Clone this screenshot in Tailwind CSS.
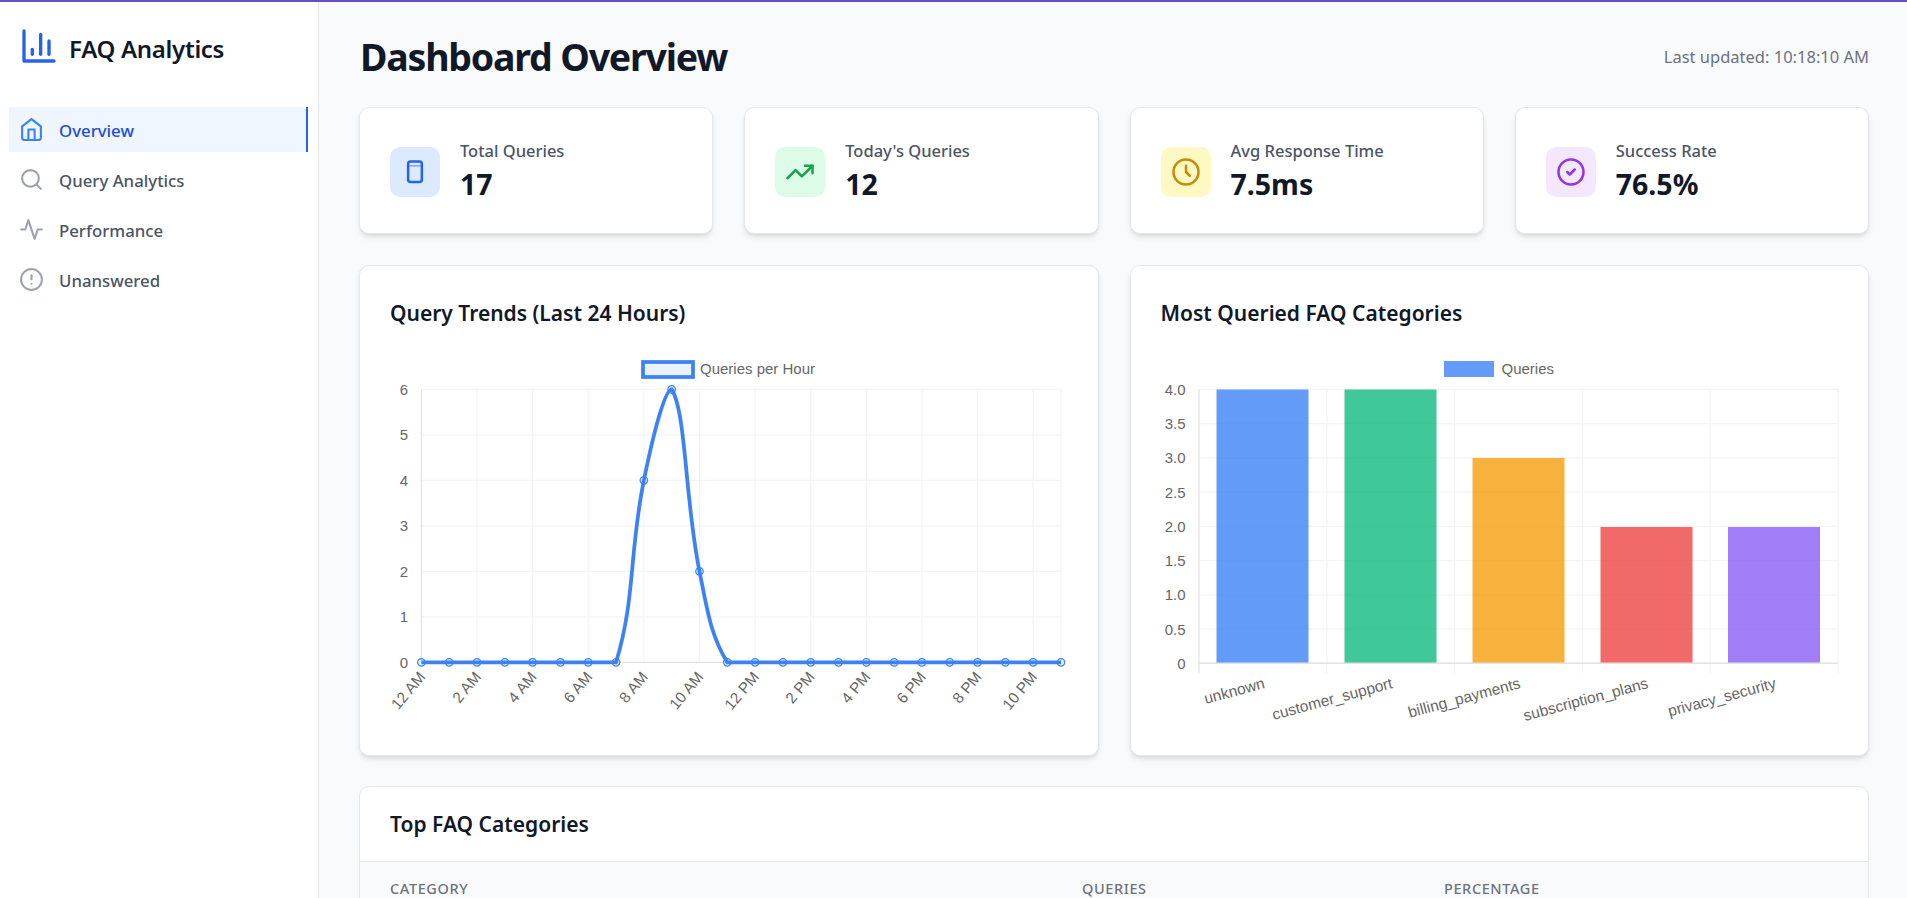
<!DOCTYPE html>
<html lang="en">
<head>
<meta charset="UTF-8">
<title>FAQ Analytics</title>
<script src="https://cdn.jsdelivr.net/npm/@tailwindcss/browser@4"></script>
</head>
<body class="h-screen overflow-hidden bg-[#f9fafb] font-['Noto_Sans',sans-serif] text-[#111827]">
<div class="h-[2px] bg-[#6650c0]"></div>
<div class="flex h-[896px]">

  <!-- Sidebar -->
  <aside class="w-[319px] shrink-0 bg-white border-r border-[#e5e7eb]">
    <div class="flex items-start gap-[10px] pl-[19px] pt-[24px]">
      <svg class="text-[#2563eb]" width="40" height="40" viewBox="0 0 24 24" fill="none" stroke="currentColor" stroke-width="2" stroke-linecap="round" stroke-linejoin="round"><path d="M3 3v18h18"/><path d="M18 17V9"/><path d="M13 17V5"/><path d="M8 17v-3"/></svg>
      <span class="mt-[5px] text-[24px] leading-[36px] font-semibold tracking-[-0.3px]">FAQ Analytics</span>
    </div>
    <nav class="mt-[40px] pl-[9px] pr-[10px] flex flex-col gap-[5px] text-[16.8px] font-medium text-[#4b5563]">
      <a class="h-[45px] flex items-center gap-[15px] pl-[10px] bg-[#eff6ff] text-[#1d4ed8] border-r-[2.5px] border-[#2563eb]">
        <svg class="text-[#3b82f6]" width="25" height="25" viewBox="0 0 24 24" fill="none" stroke="currentColor" stroke-width="2" stroke-linecap="round" stroke-linejoin="round"><path d="m3 9 9-7 9 7v11a2 2 0 0 1-2 2H5a2 2 0 0 1-2-2z"/><polyline points="9 22 9 12 15 12 15 22"/></svg>
        <span class="mt-[3px]">Overview</span>
      </a>
      <a class="h-[45px] flex items-center gap-[15px] pl-[10px]">
        <svg class="text-[#9ca3af]" width="25" height="25" viewBox="0 0 24 24" fill="none" stroke="currentColor" stroke-width="2" stroke-linecap="round" stroke-linejoin="round"><circle cx="11" cy="11" r="8"/><path d="m21 21-4.3-4.3"/></svg>
        <span class="mt-[3px]">Query Analytics</span>
      </a>
      <a class="h-[45px] flex items-center gap-[15px] pl-[10px]">
        <svg class="text-[#9ca3af]" width="25" height="25" viewBox="0 0 24 24" fill="none" stroke="currentColor" stroke-width="2" stroke-linecap="round" stroke-linejoin="round"><path d="M22 12h-4l-3 9L9 3l-3 9H2"/></svg>
        <span class="mt-[3px]">Performance</span>
      </a>
      <a class="h-[45px] flex items-center gap-[15px] pl-[10px]">
        <svg class="text-[#9ca3af]" width="25" height="25" viewBox="0 0 24 24" fill="none" stroke="currentColor" stroke-width="2" stroke-linecap="round" stroke-linejoin="round"><circle cx="12" cy="12" r="10"/><line x1="12" y1="8" x2="12" y2="12"/><line x1="12" y1="16" x2="12.01" y2="16"/></svg>
        <span class="mt-[3px]">Unanswered</span>
      </a>
    </nav>
  </aside>

  <!-- Main -->
  <main class="flex-1 min-w-0 overflow-hidden pt-[30px] pl-[40px] pr-[38px]">
    <header class="flex items-center justify-between h-[50px] mb-[25px]">
      <h1 class="ml-[1px] text-[37.5px] font-bold tracking-[-1.2px]">Dashboard Overview</h1>
      <span class="text-[16.5px] text-[#6b7280]">Last updated: 10:18:10 AM</span>
    </header>

    <!-- Stat cards -->
    <div class="grid grid-cols-4 gap-[31px] mb-[31px]">
      <div class="h-[127px] flex items-center gap-[20px] px-[30px] bg-white border border-[#e5e7eb] rounded-[10px] shadow-md">
        <div class="mt-[2px] w-[50px] h-[50px] flex items-center justify-center rounded-[10px] bg-[#dbeafe]">
          <svg class="text-[#2563eb]" width="30" height="30" viewBox="0 0 24 24" fill="none" stroke="currentColor" stroke-width="2" stroke-linecap="round" stroke-linejoin="round"><rect x="6.5" y="3.5" width="11" height="16.5" rx="2"/><line x1="6.5" y1="7" x2="17.5" y2="7" stroke-width="1" stroke-opacity="0.6"/></svg>
        </div>
        <div class="pt-[3px]">
          <p class="text-[16.5px] leading-[24px] font-medium text-[#4b5563]">Total Queries</p>
          <p class="text-[28.5px] leading-[42px] font-bold">17</p>
        </div>
      </div>
      <div class="h-[127px] flex items-center gap-[20px] px-[30px] bg-white border border-[#e5e7eb] rounded-[10px] shadow-md">
        <div class="mt-[2px] w-[50px] h-[50px] flex items-center justify-center rounded-[10px] bg-[#dcfce7]">
          <svg class="text-[#16a34a]" width="30" height="30" viewBox="0 0 24 24" fill="none" stroke="currentColor" stroke-width="2" stroke-linecap="round" stroke-linejoin="round"><polyline points="22 7 13.5 15.5 8.5 10.5 2 17"/><polyline points="16 7 22 7 22 13"/></svg>
        </div>
        <div class="pt-[3px]">
          <p class="text-[16.5px] leading-[24px] font-medium text-[#4b5563]">Today's Queries</p>
          <p class="text-[28.5px] leading-[42px] font-bold">12</p>
        </div>
      </div>
      <div class="h-[127px] flex items-center gap-[20px] px-[30px] bg-white border border-[#e5e7eb] rounded-[10px] shadow-md">
        <div class="mt-[2px] w-[50px] h-[50px] flex items-center justify-center rounded-[10px] bg-[#fef9c3]">
          <svg class="text-[#ca8a04]" width="30" height="30" viewBox="0 0 24 24" fill="none" stroke="currentColor" stroke-width="2" stroke-linecap="round" stroke-linejoin="round"><circle cx="12" cy="12" r="10"/><polyline points="12 7 12 12 15 15"/></svg>
        </div>
        <div class="pt-[3px]">
          <p class="text-[16.5px] leading-[24px] font-medium text-[#4b5563]">Avg Response Time</p>
          <p class="text-[28.5px] leading-[42px] font-bold">7.5ms</p>
        </div>
      </div>
      <div class="h-[127px] flex items-center gap-[20px] px-[30px] bg-white border border-[#e5e7eb] rounded-[10px] shadow-md">
        <div class="mt-[2px] w-[50px] h-[50px] flex items-center justify-center rounded-[10px] bg-[#f3e8ff]">
          <svg class="text-[#9333ea]" width="30" height="30" viewBox="0 0 24 24" fill="none" stroke="currentColor" stroke-width="2" stroke-linecap="round" stroke-linejoin="round"><circle cx="12" cy="12" r="10"/><path d="m9 12 2 2 4-4"/></svg>
        </div>
        <div class="pt-[3px]">
          <p class="text-[16.5px] leading-[24px] font-medium text-[#4b5563]">Success Rate</p>
          <p class="text-[28.5px] leading-[42px] font-bold">76.5%</p>
        </div>
      </div>
    </div>

    <!-- Charts -->
    <div class="grid grid-cols-2 gap-[31px] mb-[30px]">
      <div class="h-[491px] bg-white border border-[#e5e7eb] rounded-[10px] shadow-md px-[30px] pt-[31px]">
        <h2 class="text-[21px] leading-[32px] font-semibold mb-[11px]">Query Trends (Last 24 Hours)</h2>
        <svg id="trend" class="overflow-visible font-['Liberation_Sans',sans-serif]" width="678" height="390" viewBox="390 340 678 390" fill="#666" font-size="15">
          <rect x="643" y="362" width="50" height="15" fill="#ebf2fe" stroke="#3b82f6" stroke-width="3.75"/>
          <text x="700" y="374">Queries per Hour</text>
        </svg>
      </div>
      <div class="h-[491px] bg-white border border-[#e5e7eb] rounded-[10px] shadow-md px-[30px] pt-[31px]">
        <h2 class="text-[21px] leading-[32px] font-semibold mb-[11px]">Most Queried FAQ Categories</h2>
        <svg id="bars" class="overflow-visible font-['Liberation_Sans',sans-serif]" width="678" height="390" viewBox="1160.5 340 678 390" fill="#666" font-size="15">
          <rect x="1443.5" y="361" width="50" height="16" fill="#629bf8"/>
          <text x="1501" y="374">Queries</text>
          <rect x="1216" y="389.5" width="92" height="274" fill="#3b82f6" fill-opacity="0.8"/>
          <rect x="1344" y="389.5" width="92" height="274" fill="#10b981" fill-opacity="0.8"/>
          <rect x="1472" y="458" width="92" height="205.5" fill="#f59e0b" fill-opacity="0.8"/>
          <rect x="1600" y="527" width="92" height="136.5" fill="#ef4444" fill-opacity="0.8"/>
          <rect x="1727.5" y="527" width="92" height="136.5" fill="#8b5cf6" fill-opacity="0.8"/>
        </svg>
      </div>
    </div>

    <!-- Table -->
    <div class="bg-white border border-[#e5e7eb] rounded-t-[10px]">
      <h2 class="h-[75px] flex items-center px-[30px] pt-[2px] text-[21px] font-semibold border-b border-[#e5e7eb]">Top FAQ Categories</h2>
      <div class="grid grid-cols-[692px_362px_1fr] px-[30px] pt-[15px] h-[60px] bg-[#f9fafb] text-[14.5px] leading-[22px] font-medium uppercase tracking-[0.6px] text-[#6b7280]">
        <span>Category</span>
        <span>Queries</span>
        <span>Percentage</span>
      </div>
    </div>
  </main>
</div>

<script>
  const NS = 'http://www.w3.org/2000/svg';
  const GRID = '#f3f4f6';
  const AXIS = '#e2e2e2';

  function add(svg, tag, attrs, text) {
    const el = document.createElementNS(NS, tag);
    for (const k in attrs) el.setAttribute(k, attrs[k]);
    if (text !== undefined) el.textContent = text;
    svg.appendChild(el);
    return el;
  }

  function line(svg, x1, y1, x2, y2, stroke, width) {
    return add(svg, 'line', { x1, y1, x2, y2, stroke, 'stroke-width': width || 1.25 });
  }

  // Query trends
  const trend = document.getElementById('trend');
  const pLeft = 421.4, pRight = 1061, pTop = 389.3, pBottom = 662.3;
  const dx = (pRight - pLeft) / 23, unit = (pBottom - pTop) / 6;
  const hours = Array(24).fill(0);
  hours[8] = 4; hours[9] = 6; hours[10] = 2;
  const pts = hours.map((v, i) => ({ x: pLeft + i * dx, y: pBottom - v * unit }));

  for (let v = 0; v <= 6; v++) {
    const y = pBottom - v * unit;
    if (v > 0) line(trend, pLeft, y, pRight, y, GRID);
    add(trend, 'text', { x: 408, y: y + 5.5, 'text-anchor': 'end' }, v);
  }
  for (let i = 0; i < 24; i += 2) {
    const x = pLeft + i * dx;
    line(trend, x, pTop, x, pBottom, i === 0 ? AXIS : GRID);
    const h = i % 12 === 0 ? 12 : i % 12;
    add(trend, 'text', {
      transform: `translate(${x + 1} 674) rotate(-50)`,
      'text-anchor': 'end', y: 5, 'font-size': 15.3
    }, `${h} ${i < 12 ? 'AM' : 'PM'}`);
  }
  line(trend, pRight, pTop, pRight, pBottom, GRID);
  line(trend, pLeft, pBottom, pRight, pBottom, AXIS);

  // same spline as the chart lib: tension 0.4
  const ctrl = pts.map((p, i) => {
    const a = pts[i - 1] || p, b = pts[i + 1] || p;
    const d1 = Math.hypot(p.x - a.x, p.y - a.y), d2 = Math.hypot(b.x - p.x, b.y - p.y);
    const s1 = d1 / (d1 + d2), s2 = d2 / (d1 + d2);
    const cap = y => Math.min(pBottom, Math.max(pTop, y));
    return {
      px: p.x - 0.4 * s1 * (b.x - a.x), py: cap(p.y - 0.4 * s1 * (b.y - a.y)),
      nx: p.x + 0.4 * s2 * (b.x - a.x), ny: cap(p.y + 0.4 * s2 * (b.y - a.y))
    };
  });
  let d = `M${pts[0].x} ${pts[0].y}`;
  for (let i = 1; i < pts.length; i++) {
    d += `C${ctrl[i - 1].nx} ${ctrl[i - 1].ny} ${ctrl[i].px} ${ctrl[i].py} ${pts[i].x} ${pts[i].y}`;
  }
  add(trend, 'path', { d, fill: 'none', stroke: '#3b82f6', 'stroke-width': 3.75 });
  pts.forEach(p => add(trend, 'circle', { cx: p.x, cy: p.y, r: 3.75, fill: '#3b82f6', 'fill-opacity': 0.1, stroke: '#3b82f6', 'stroke-width': 1.25 }));

  // Categories
  const bars = document.getElementById('bars');
  const first = bars.querySelector('rect:nth-of-type(2)');
  const bLeft = 1198.5, bRight = 1837.5, bTop = 389.3, bBottom = 663.3;
  const step = (bRight - bLeft) / 5, ystep = (bBottom - bTop) / 8;
  const ylabels = ['0', '0.5', '1.0', '1.5', '2.0', '2.5', '3.0', '3.5', '4.0'];
  ylabels.forEach((t, i) => {
    const y = bBottom - i * ystep;
    if (i > 0) bars.insertBefore(line(bars, bLeft, y, bRight, y, GRID), first);
    add(bars, 'text', { x: 1185, y: y + 5.5, 'text-anchor': 'end' }, t);
  });
  for (let i = 0; i <= 5; i++) {
    const x = bLeft + i * step;
    bars.insertBefore(line(bars, x, bTop, x, 673, i === 0 ? AXIS : GRID), first);
  }
  line(bars, bLeft, bBottom, bRight, bBottom, AXIS, 1.5);
  ['unknown', 'customer_support', 'billing_payments', 'subscription_plans', 'privacy_security'].forEach((t, i) => {
    const x = bLeft + (i + 0.5) * step;
    add(bars, 'text', { transform: `translate(${x + 1.5} 683) rotate(-15)`, 'text-anchor': 'end', y: 5, 'font-size': 15.5 }, t);
  });
</script>
</body>
</html>
